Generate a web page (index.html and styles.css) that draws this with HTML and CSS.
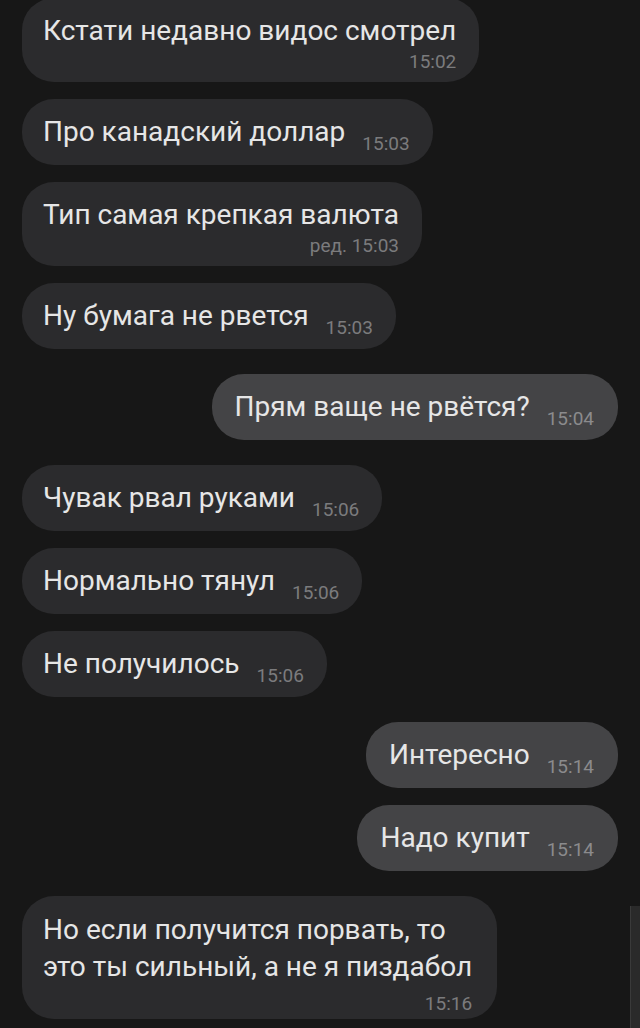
FILE: index.html
```html
<!DOCTYPE html>
<html lang="ru">
<head>
<meta charset="utf-8">
<title>Чат</title>
<link rel="stylesheet" href="styles.css">
</head>
<body>
<div class="chat">
  <div class="msg in stacked first">
    <div class="text">Кстати недавно видос смотрел</div>
    <div class="time">15:02</div>
  </div>
  <div class="msg in inline">
    <div class="text">Про канадский доллар</div>
    <div class="time">15:03</div>
  </div>
  <div class="msg in stacked">
    <div class="text">Тип самая крепкая валюта</div>
    <div class="time">ред. 15:03</div>
  </div>
  <div class="msg in inline">
    <div class="text">Ну бумага не рвется</div>
    <div class="time">15:03</div>
  </div>
  <div class="msg out inline switch">
    <div class="text">Прям ваще не рвётся?</div>
    <div class="time">15:04</div>
  </div>
  <div class="msg in inline switch">
    <div class="text">Чувак рвал руками</div>
    <div class="time">15:06</div>
  </div>
  <div class="msg in inline">
    <div class="text">Нормально тянул</div>
    <div class="time">15:06</div>
  </div>
  <div class="msg in inline">
    <div class="text">Не получилось</div>
    <div class="time">15:06</div>
  </div>
  <div class="msg out inline switch">
    <div class="text">Интересно</div>
    <div class="time">15:14</div>
  </div>
  <div class="msg out inline">
    <div class="text">Надо купит</div>
    <div class="time">15:14</div>
  </div>
  <div class="msg in stacked multi switch">
    <div class="text">Но если получится порвать, то<br>это ты сильный, а не я пиздабол</div>
    <div class="time">15:16</div>
  </div>
</div>
<div class="scrollbar"></div>
</body>
</html>
```

FILE: styles.css
```css
html, body {
  margin: 0;
  padding: 0;
  background: #171717;
  height: 100%;
  overflow: hidden;
}

body {
  font-family: Roboto, "Noto Sans", sans-serif;
  color: #e6e6e6;
  position: relative;
}

.chat {
  display: flex;
  flex-direction: column;
  gap: 17px;
  padding: 0 22px;
}

.msg {
  border-radius: 32px;
  padding: 14px 23px 15px 21px;
  box-sizing: border-box;
}

.msg.first {
  margin-top: -2px;
}

.msg.switch {
  margin-top: 8px;
}

.msg.in {
  align-self: flex-start;
  background: #2b2b2d;
}

.msg.out {
  align-self: flex-end;
  background: #444446;
  padding-left: 23px;
  padding-right: 24px;
}

.text {
  font-size: 28px;
  line-height: 37px;
  white-space: nowrap;
}

.time {
  font-size: 19px;
  line-height: 22px;
  color: #7b7b7d;
  white-space: nowrap;
}

.out .time {
  color: #8b8b8d;
}

.inline {
  display: flex;
  align-items: flex-end;
  gap: 17px;
}

.inline .time {
  margin-bottom: -5px;
}

.stacked {
  display: flex;
  flex-direction: column;
  padding-bottom: 9px;
}

.stacked .time {
  align-self: flex-end;
  margin-top: 2px;
}

.stacked.multi {
  padding-top: 15px;
  padding-bottom: 4px;
  padding-right: 25px;
}

.stacked.multi .time {
  margin-top: 8px;
}

.scrollbar {
  position: absolute;
  right: 0;
  top: 906px;
  width: 9px;
  height: 122px;
  background: #2a2a2a;
  border-left: 1px solid #3a3a3a;
}
```
